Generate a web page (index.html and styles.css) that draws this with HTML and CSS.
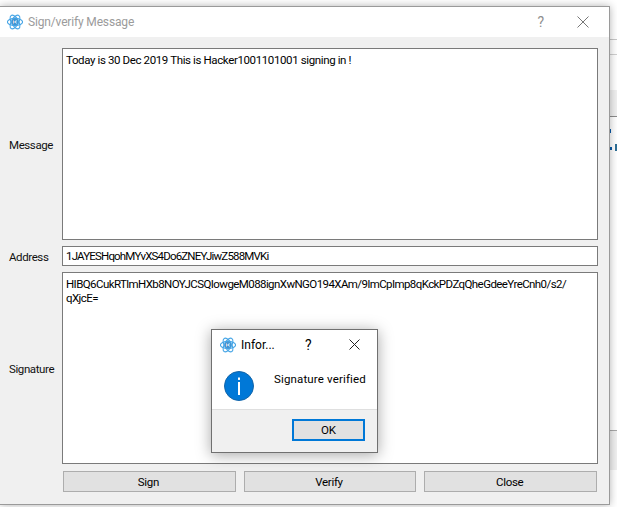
FILE: index.html
```html
<!DOCTYPE html>
<html lang="en">
<head>
<meta charset="utf-8">
<title>Sign/verify Message</title>
<link rel="stylesheet" href="styles.css">
</head>
<body>
<svg class="defs" width="0" height="0" aria-hidden="true">
  <symbol id="atom" viewBox="0 0 16 16">
    <g fill="none" stroke="#48a6e6" stroke-width="1.1">
      <ellipse cx="8" cy="8" rx="7.6" ry="3.6"/>
      <ellipse cx="8" cy="8" rx="7.6" ry="3.6" transform="rotate(60 8 8)"/>
      <ellipse cx="8" cy="8" rx="7.6" ry="3.6" transform="rotate(120 8 8)"/>
      <circle cx="8" cy="8" r="2.8" stroke="#2a86cc" stroke-width="1"/>
    </g>
  </symbol>
</svg>
<div class="backdrop">
  <div class="bd-line bd-a"></div>
  <div class="bd-line bd-b"></div>
  <div class="bd-band"></div>
  <div class="bd-glyph bd-g1"></div>
  <div class="bd-glyph bd-g2"></div>
  <div class="bd-glyph bd-g3"></div>
  <div class="bd-foot"></div>
</div>
<main class="window">
  <header class="titlebar">
    <svg class="app-icon" viewBox="0 0 16 16"><use href="#atom" width="16" height="16"/><text x="8" y="10" class="atom-d">D</text></svg>
    <span class="title">Sign/verify Message</span>
    <span class="help">?</span>
    <svg class="close" viewBox="0 0 12 12"><path d="M0.5 0.5L11.5 11.5M11.5 0.5L0.5 11.5" stroke="#777" fill="none"/></svg>
  </header>
  <div class="client">
    <div class="form">
      <label class="label">Message</label>
      <div class="field area">Today is 30 Dec 2019 This is Hacker1001101001 signing in !</div>
      <label class="label">Address</label>
      <div class="field line">1JAYESHqohMYvXS4Do6ZNEYJiwZ588MVKi</div>
      <label class="label">Signature</label>
      <div class="field area sig">HIBQ6CukRTlmHXb8NOYJCSQIowgeM088ignXwNGO194XAm/9lmCpImp8qKckPDZqQheGdeeYreCnh0/s2/<br>qXjcE=</div>
    </div>
    <div class="buttons">
      <button class="btn">Sign</button>
      <button class="btn">Verify</button>
      <button class="btn">Close</button>
    </div>
  </div>
</main>
<section class="dialog">
  <header class="dlg-title">
    <svg class="dlg-icon" viewBox="0 0 16 16"><use href="#atom" width="16" height="16"/><text x="8" y="10" class="atom-d">D</text></svg>
    <span class="dlg-name">Infor...</span>
    <span class="dlg-help">?</span>
    <svg class="dlg-close" viewBox="0 0 11 11"><path d="M0.5 0.5L10.5 10.5M10.5 0.5L0.5 10.5" stroke="#222" fill="none"/></svg>
  </header>
  <div class="dlg-body">
    <svg class="info" viewBox="0 0 30 30">
      <circle cx="15" cy="15" r="14.5" fill="#0078d7" stroke="#1465a8"/>
      <rect x="14" y="6.5" width="2" height="2.4" fill="#fff"/>
      <rect x="14" y="11" width="2" height="13" fill="#fff"/>
    </svg>
    <p class="dlg-text">Signature verified</p>
  </div>
  <footer class="dlg-foot"><button class="ok">OK</button></footer>
</section>
</body>
</html>
```
FILE: styles.css
```css
html, body { margin: 0; height: 100%; }
body {
  width: 617px;
  height: 507px;
  overflow: hidden;
  position: relative;
  background: #fff;
  font-family: Roboto, "Liberation Sans", sans-serif;
  font-size: 11.5px;
  color: #000;
}
.defs { position: absolute; }
.atom-d { font-size: 5.5px; font-weight: 700; fill: #2a86cc; text-anchor: middle; }

.backdrop { position: absolute; left: 600px; top: 0; width: 17px; height: 507px; }
.bd-line { position: absolute; left: 0; right: 0; height: 1px; background: #a0a0a0; }
.bd-a { top: 39px; background: #c8c8c8; }
.bd-b { top: 54px; background: #d0d0d0; }
.bd-band { position: absolute; left: 0; right: 0; top: 90px; height: 26px; background: #f0f0f0; border-bottom: 1px solid #8c8c8c; }
.bd-glyph { position: absolute; background: #0a5aa8; width: 2px; height: 3px; left: 10px; }
.bd-g1 { top: 129px; height: 4px; width: 1px; }
.bd-g2 { top: 147px; }
.bd-g3 { top: 144px; left: 15px; height: 7px; background: #2f6f96; }
.bd-foot { position: absolute; left: 0; right: 0; top: 430px; height: 40px; background: #f0f0f0; border-top: 1px solid #a8a8a8; box-sizing: border-box; }

.window {
  position: absolute;
  left: 0;
  top: 6px;
  width: 610px;
  height: 499px;
  box-sizing: border-box;
  border: 1px solid #9a9a9a;
  border-left: 0;
  display: flex;
  flex-direction: column;
  box-shadow: 0 0 8px rgba(0,0,0,.3);
}
.titlebar {
  flex: 0 0 30px;
  background: #fff;
  display: flex;
  align-items: center;
  padding: 0 20px 0 7px;
}
.app-icon { width: 16px; height: 16px; }
.title { margin-left: 5px; color: #9b9b9b; font-size: 12px; letter-spacing: -0.16px; flex: 1; }
.help { color: #8f8f8f; font-size: 14px; margin-right: 33px; }
.close { width: 12px; height: 12px; }

.client {
  flex: 1;
  background: #f0f0f0;
  padding: 11px 11px 11px 9px;
  display: flex;
  flex-direction: column;
  gap: 7px;
}
.form {
  display: grid;
  grid-template-columns: 53px 1fr;
  grid-template-rows: 192px 20px 192px;
  gap: 6px 0;
  align-items: center;
}
.label { color: #111; padding-top: 2px; letter-spacing: -0.4px; }
.field {
  background: #fff;
  border: 1px solid #7a7a7a;
  box-sizing: border-box;
  height: 100%;
  padding: 4px 3px;
  line-height: 14px;
  letter-spacing: -0.38px;
  white-space: nowrap;
  overflow: hidden;
}
.sig { letter-spacing: -0.58px; }
.line { padding: 2px 3px; letter-spacing: -0.82px; }
.buttons {
  display: grid;
  grid-template-columns: repeat(3, 1fr);
  gap: 8px;
  padding-left: 54px;
  padding-right: 1px;
}
.btn {
  height: 21px;
  background: #e1e1e1;
  border: 1px solid #adadad;
  font: inherit;
  letter-spacing: -0.3px;
  color: #000;
  padding: 0 2px 0 0;
}

.dialog {
  position: absolute;
  left: 211px;
  top: 329px;
  width: 167px;
  height: 124px;
  box-sizing: border-box;
  border: 1px solid #707070;
  background: #fff;
  display: flex;
  flex-direction: column;
  box-shadow: 0 2px 14px rgba(0,0,0,.35);
}
.dlg-title { flex: 0 0 29px; display: flex; align-items: center; padding: 0 17px 0 8px; }
.dlg-icon { width: 16px; height: 16px; }
.dlg-name { margin-left: 5px; font-size: 12px; width: 64px; }
.dlg-help { font-size: 14px; flex: 1; }
.dlg-close { width: 11px; height: 11px; }
.dlg-body { flex: 1; display: flex; align-items: flex-start; padding: 12px 0 0 12px; }
.info { width: 30px; height: 30px; }
.dlg-text { margin: 0 0 0 20px; line-height: 16px; letter-spacing: 0.15px; }
.dlg-foot {
  flex: 0 0 43px;
  box-sizing: border-box;
  background: #f0f0f0;
  border-top: 1px solid #dfdfdf;
  display: flex;
  justify-content: flex-end;
  padding: 9px 12px 0 0;
}
.ok {
  width: 73px;
  height: 22px;
  background: #e1e1e1;
  border: 2px solid #0078d7;
  font: inherit;
  color: #000;
  padding: 0;
}
```
